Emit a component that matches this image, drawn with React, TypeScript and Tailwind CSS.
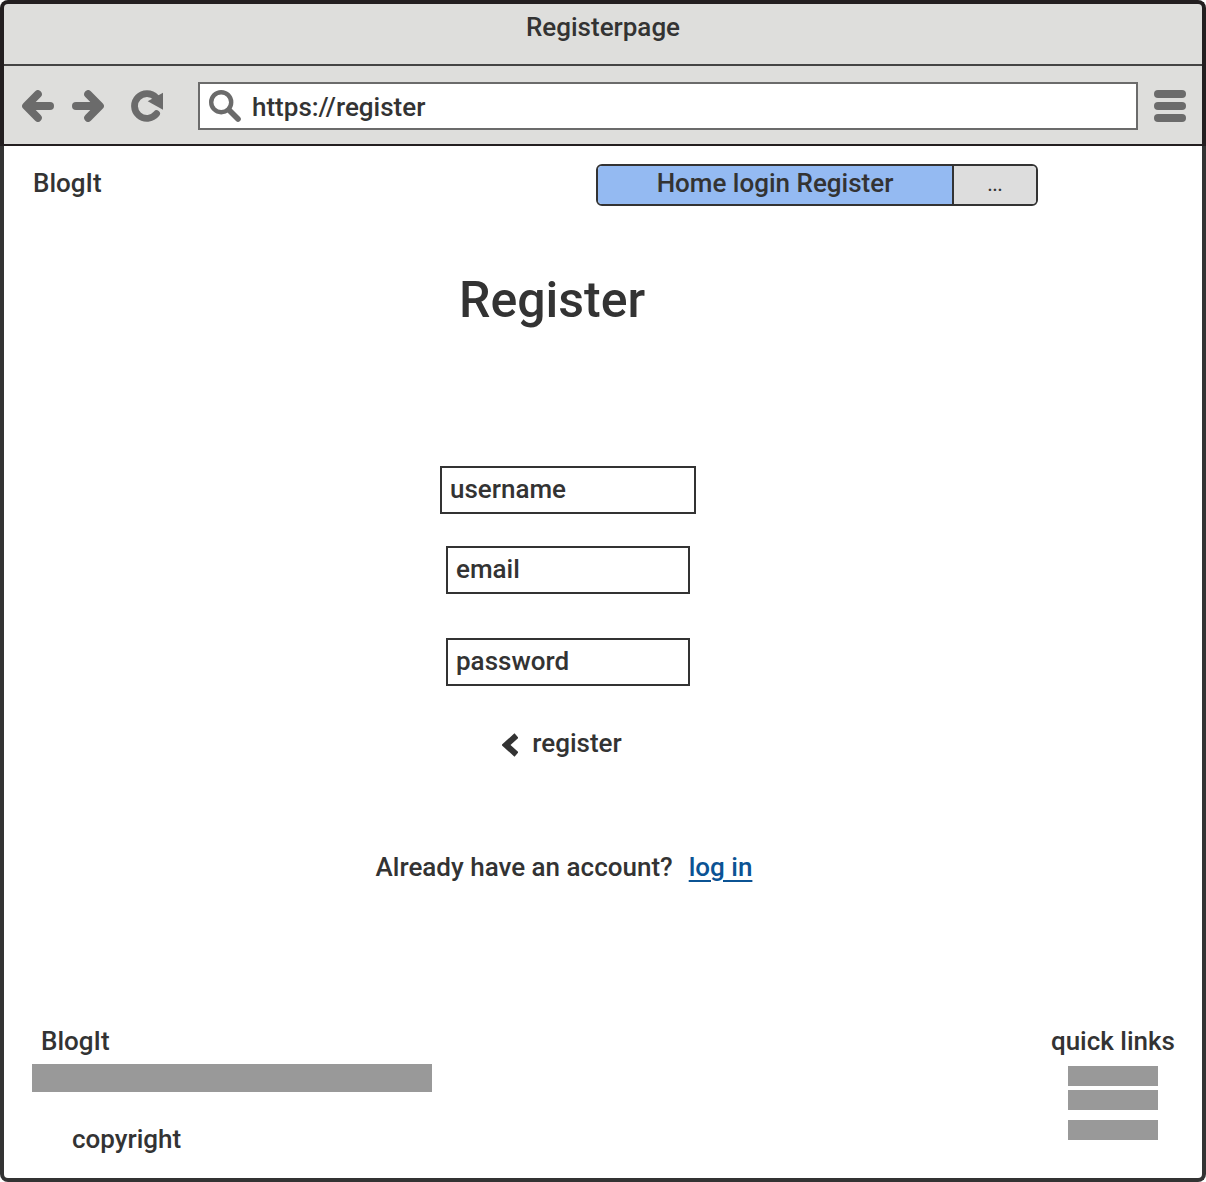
import React from "react";

function ArrowIcon({ flipped = false }: { flipped?: boolean }) {
  return (
    <svg viewBox="0 0 32 32" className="size-8" fill="none" stroke="currentColor" strokeWidth="8" strokeLinecap="round" strokeLinejoin="round" aria-hidden="true">
      <g transform={flipped ? "matrix(-1 0 0 1 32 0)" : undefined}>
        <path d="M15.8 4.200 4.200 16l11.600 11.800" />
        <path d="M6 16h22" />
      </g>
    </svg>
  );
}

function ReloadIcon() {
  return (
    <svg viewBox="0 0 32 32" className="size-8" fill="none" aria-hidden="true">
      <path d="M25 7.500A12.400 12.400 0 1 0 25.600 23.700" stroke="currentColor" strokeWidth="6.800" strokeLinecap="round" />
      <path d="M32 2.8v16.9L16.700 11.2z" fill="currentColor" />
    </svg>
  );
}

function SearchIcon() {
  return (
    <svg viewBox="0 0 32 32" className="size-8 shrink-0 text-[#6b6b6b]" fill="none" stroke="currentColor" aria-hidden="true">
      <circle cx="12.2" cy="12.2" r="10" strokeWidth="4.4" />
      <path d="M20 20l9 9" strokeWidth="5.6" strokeLinecap="round" />
    </svg>
  );
}

function BrowserBar() {
  return (
    <header className="rounded-t-lg border-x-4 border-t-4 border-[#231f20] bg-[#dededc]">
      <h2 className="border-b-2 border-[#444444] pt-[7px] pb-[21px] text-center">Registerpage</h2>
      <div className="flex items-center border-b-2 border-[#231f20] px-4 pt-4 pb-[14px] text-[#6b6b6b]">
        <button type="button" aria-label="Back" className="ml-[2px]">
          <ArrowIcon />
        </button>
        <button type="button" aria-label="Forward" className="ml-[18px]">
          <ArrowIcon flipped />
        </button>
        <button type="button" aria-label="Reload" className="ml-[27px]">
          <ReloadIcon />
        </button>
        <div className="mr-4 ml-[35px] flex h-12 min-w-0 flex-1 items-center gap-[11px] border-2 border-[#6b6b6b] bg-white pl-[9px]">
          <SearchIcon />
          <input
            type="text"
            aria-label="Address"
            defaultValue="https://register"
            className="min-w-0 flex-1 pt-[2px] text-[#333333] outline-none"
          />
        </div>
        <button type="button" aria-label="Menu" className="flex w-8 flex-col gap-1">
          <span className="h-2 w-full rounded-full bg-[#6b6b6b]" />
          <span className="h-2 w-full rounded-full bg-[#6b6b6b]" />
          <span className="h-2 w-full rounded-full bg-[#6b6b6b]" />
        </button>
      </div>
    </header>
  );
}

function SiteHeader() {
  return (
    <div className="flex items-center justify-between pt-[18px] pr-[164px] pl-[29px]">
      <div className="pb-1">BlogIt</div>
      <nav className="flex h-[42px] w-[442px] overflow-hidden rounded-md border-2 border-[#333333]">
        <button type="button" className="flex-1 border-r-2 border-[#333333] bg-[#94baf2] pb-1">
          Home login Register
        </button>
        <button type="button" className="w-[82px] bg-[#dddddd] text-lg">
          ...
        </button>
      </nav>
    </div>
  );
}

const fieldClass =
  "h-12 border-2 border-[#333333] bg-white px-2 pb-[2px] placeholder:text-[#333333] placeholder:opacity-100";

function RegisterForm() {
  return (
    <form className="mt-[136px] flex flex-col items-center pr-[70px]">
      <input type="text" aria-label="username" placeholder="username" className={fieldClass + " w-64"} />
      <input type="email" aria-label="email" placeholder="email" className={fieldClass + " mt-8 w-[244px]"} />
      <input type="password" aria-label="password" placeholder="password" className={fieldClass + " mt-11 w-[244px]"} />
      <button type="button" className="mt-[41px] flex items-center gap-[14px] pr-3">
        <svg viewBox="0 0 16 24" className="mt-1 h-6 w-4" fill="none" stroke="currentColor" strokeWidth="6" aria-hidden="true">
          <path d="M14.500 2.500 4 12l10.500 9.500" />
        </svg>
        register
      </button>
    </form>
  );
}

function Footer() {
  return (
    <footer className="mt-auto flex items-start justify-between pr-[27px] pb-[23px] pl-7">
      <div>
        <div className="pl-[9px]">BlogIt</div>
        <div className="mt-[7px] h-7 w-[400px] bg-[#999999]" />
        <div className="mt-[31px] pl-10">copyright</div>
      </div>
      <div className="flex flex-col items-center">
        <div>quick links</div>
        <div className="mt-[9px] h-5 w-[90px] bg-[#999999]" />
        <div className="mt-1 h-5 w-[90px] bg-[#999999]" />
        <div className="mt-[10px] h-5 w-[90px] bg-[#999999]" />
      </div>
    </footer>
  );
}

export default function App() {
  return (
    <div className="flex min-h-screen flex-col bg-white font-['Roboto','Liberation_Sans',sans-serif] text-[26px] leading-8 font-medium text-[#333333]">
      <BrowserBar />
      <main className="flex flex-1 flex-col rounded-b-lg border-x-4 border-b-4 border-[#333333]">
        <SiteHeader />
        <h1 className="mt-16 pr-[102px] text-center text-[50px] leading-[60px] font-medium">Register</h1>
        <RegisterForm />
        <p className="mt-[92px] flex justify-center gap-4 pr-[78px]">
          Already have an account?
          <a href="#login" className="text-[#0b5394] underline decoration-2 underline-offset-4">
            log in
          </a>
        </p>
        <Footer />
      </main>
    </div>
  );
}
